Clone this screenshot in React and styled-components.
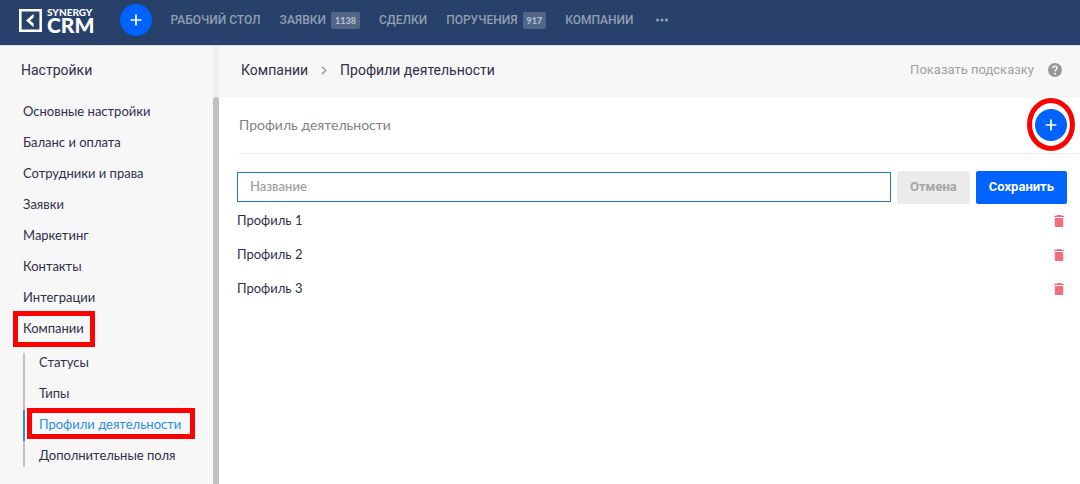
import React from 'react';
import styled, { createGlobalStyle, css } from 'styled-components';

const GlobalStyle = createGlobalStyle`
  *, *::before, *::after { box-sizing: border-box; }
  body {
    margin: 0;
    background: #fff;
    color: #2f3048;
    font: 13px/16px Lato, "Liberation Sans", sans-serif;
  }
  ul { list-style: none; margin: 0; padding: 0; }
  a { color: inherit; text-decoration: none; }
  button, input { font: inherit; }
  button { border: 0; padding: 0; cursor: pointer; }
`;

const Page = styled.div`
  display: flex;
  flex-direction: column;
  min-height: 100vh;
`;

const TopBar = styled.header`
  display: flex;
  align-items: center;
  height: 46px;
  padding: 0 19px 5px;
  background: #27416b;
  border-bottom: 1px solid #d9dee6;
`;

const Logo = styled.a`
  display: flex;
  align-items: center;
  gap: 5px;
  color: #fff;
  margin-right: 26px;
`;

const LogoText = styled.span`
  display: flex;
  flex-direction: column;
  font-weight: 900;
`;

const LogoTop = styled.span`
  font-size: 10px;
  line-height: 8px;
`;

const LogoBottom = styled.span`
  font-size: 21px;
  line-height: 17px;
`;

const RoundButton = styled.button`
  display: flex;
  align-items: center;
  justify-content: center;
  width: 32px;
  height: 32px;
  border-radius: 50%;
  background: #0062ff;
  color: #fff;
`;

const Nav = styled.nav`
  display: flex;
  align-items: center;
  gap: 19px;
  margin-left: 18px;
`;

const NavLink = styled.a`
  display: flex;
  align-items: center;
  gap: 5px;
  color: #929eb1;
  font-family: Roboto, sans-serif;
  font-size: 12px;
  font-weight: 500;
  text-transform: uppercase;
  white-space: nowrap;
`;

const Badge = styled.span`
  padding: 0 4px;
  border-radius: 2px;
  background: #526788;
  color: #b3bdcb;
  font-family: Lato, sans-serif;
  font-size: 9px;
  font-weight: 900;
  line-height: 17px;
`;

const MoreButton = styled.button`
  display: flex;
  background: none;
  color: #929eb1;
`;

const Body = styled.div`
  display: flex;
  flex: 1;
`;

const Sidebar = styled.aside`
  flex: 0 0 213px;
  padding: 16px 0 12px 23px;
  background: #f7f7f7;
`;

const SidebarTitle = styled.h2`
  margin: 0 0 17px -2px;
  font-family: Roboto, sans-serif;
  font-size: 14px;
  font-weight: 400;
  line-height: 17px;
`;

const MenuLink = styled.a`
  position: relative;
  display: inline-flex;
  align-items: center;
  height: 31px;
  padding-bottom: 2px;
  vertical-align: top;
  white-space: nowrap;
  ${p => p.$active && css`color: #2a8fe5;`}
`;

const MenuItem = styled.li`
  height: 31px;
`;

const SubMenu = styled.ul`
  position: relative;
  margin-top: 4px;
  &::before {
    content: "";
    position: absolute;
    inset: 5px auto 5px 0;
    width: 2px;
    background: #c4c4c4;
  }
`;

const SubItem = styled.li`
  position: relative;
  height: 31px;
  padding-left: 14px;
  border-left: 2px solid ${p => (p.$active ? '#2a8fe5' : 'transparent')};
  ${MenuLink} { padding-bottom: 4px; }
`;

const Mark = styled.span`
  position: absolute;
  inset: ${p => p.$inset};
  border: 5px solid #f00;
  border-radius: ${p => (p.$round ? '50%' : '0')};
  pointer-events: none;
`;

const ScrollTrack = styled.div`
  flex: 0 0 6px;
  display: flex;
  padding-top: 51px;
  background: #f0f0f0;
`;

const ScrollThumb = styled.div`
  flex: 1;
  border-radius: 3px 3px 0 0;
  background: #c1c1c1;
`;

const Main = styled.main`
  flex: 1;
  min-width: 0;
`;

const Crumbs = styled.div`
  display: flex;
  align-items: center;
  height: 51px;
  padding: 0 18px 3px 22px;
  background: #f7f7f7;
  font-family: Roboto, sans-serif;
  font-size: 14px;
`;

const CrumbArrow = styled.svg`
  margin: 0 13px;
`;

const HintButton = styled.button`
  display: flex;
  align-items: center;
  gap: 14px;
  margin-left: auto;
  background: none;
  color: #a0a0a3;
  font-size: 13px;
`;

const SectionHead = styled.div`
  display: flex;
  align-items: center;
  justify-content: space-between;
  height: 57px;
  margin-left: 20px;
  padding-right: 13px;
  border-bottom: 1px solid #ececec;
  color: #828282;
`;

const SectionTitle = styled.h1`
  margin: 0;
  font-size: 14px;
  font-weight: 400;
`;

const AddWrap = styled.div`
  position: relative;
`;

const Form = styled.form`
  display: flex;
  align-items: flex-start;
  gap: 6px;
  padding: 17px 13px 0 18px;
`;

const NameInput = styled.input`
  flex: 1;
  min-width: 0;
  height: 30px;
  margin-top: 1px;
  padding: 0 12px 2px;
  border: 1px solid #2478b8;
  border-radius: 0;
  outline: 0;
  background: #fff;
  color: #2f3048;
  font-weight: 500;
  &::placeholder { color: #9b9b9b; opacity: 1; }
`;

const FormButton = styled.button`
  height: 33px;
  padding: 0 13px 2px;
  border-radius: 2px;
  background: ${p => (p.$primary ? '#0062ff' : '#ebebeb')};
  color: ${p => (p.$primary ? '#fff' : '#a5a5a5')};
  font-family: Roboto, sans-serif;
  font-size: 13px;
  font-weight: 700;
`;

const Row = styled.li`
  display: flex;
  align-items: center;
  justify-content: space-between;
  height: 34px;
  padding: 0 16px 0 18px;
`;

const RowName = styled.span`
  padding-bottom: 2px;
`;

const DeleteButton = styled.button`
  display: flex;
  background: none;
  color: #f36d7f;
`;

const Plus = () => (
  <svg width="12" height="12" viewBox="0 0 12 12" aria-hidden="true">
    <path d="M6 .6v10.8M.6 6h10.8" stroke="currentColor" strokeWidth="1.7" />
  </svg>
);

const Trash = () => (
  <svg width="10" height="12" viewBox="0 0 10 12" aria-hidden="true">
    <path d="M3 0h4l.6.7H10V2H0V.7h2.4zM.8 3h8.4v7.7c0 .7-.6 1.3-1.3 1.3H2.1C1.4 12 .8 11.4.8 10.7z" fill="currentColor" />
  </svg>
);

const nav = [
  ['Рабочий стол'],
  ['Заявки', '1138'],
  ['Сделки'],
  ['Поручения', '917'],
  ['Компании'],
];
const menu = ['Основные настройки', 'Баланс и оплата', 'Сотрудники и права', 'Заявки', 'Маркетинг', 'Контакты', 'Интеграции', 'Компании'];
const subMenu = ['Статусы', 'Типы', 'Профили деятельности', 'Дополнительные поля'];
const profiles = ['Профиль 1', 'Профиль 2', 'Профиль 3'];

export default function App() {
  return (
    <Page>
      <GlobalStyle />
      <TopBar>
        <Logo href="#">
          <svg width="23" height="23" viewBox="0 0 23 23" aria-hidden="true">
            <path d="M1.3 1.3h20.4v20.4H1.3z" fill="none" stroke="#fff" strokeWidth="2.6" />
            <path d="M14.6 4.8v3.7l-3.5 3 3.5 3v3.7L7 11.5z" fill="#fff" />
          </svg>
          <LogoText>
            <LogoTop>SYNERGY</LogoTop>
            <LogoBottom>CRM</LogoBottom>
          </LogoText>
        </Logo>
        <RoundButton aria-label="Создать"><Plus /></RoundButton>
        <Nav>
          {nav.map(([label, count]) => (
            <NavLink href="#" key={label}>
              {label}
              {count && <Badge>{count}</Badge>}
            </NavLink>
          ))}
          <MoreButton aria-label="Ещё">
            <svg width="17" height="4" viewBox="0 0 17 4" fill="currentColor" aria-hidden="true">
              <circle cx="4.5" cy="2" r="1.6" />
              <circle cx="9" cy="2" r="1.6" />
              <circle cx="13.5" cy="2" r="1.6" />
            </svg>
          </MoreButton>
        </Nav>
      </TopBar>
      <Body>
        <Sidebar>
          <SidebarTitle>Настройки</SidebarTitle>
          <ul>
            {menu.map(label => (
              <MenuItem key={label}>
                <MenuLink href="#">
                  {label}
                  {label === 'Компании' && <Mark $inset="-2px -11px -3px -10px" />}
                </MenuLink>
              </MenuItem>
            ))}
          </ul>
          <SubMenu>
            {subMenu.map(label => {
              const active = label === 'Профили деятельности';
              return (
                <SubItem key={label} $active={active}>
                  <MenuLink href="#" $active={active}>
                    {label}
                    {active && <Mark $inset="-2px -14px 2px -12px" />}
                  </MenuLink>
                </SubItem>
              );
            })}
          </SubMenu>
        </Sidebar>
        <ScrollTrack><ScrollThumb /></ScrollTrack>
        <Main>
          <Crumbs>
            <a href="#">Компании</a>
            <CrumbArrow width="6" height="9" viewBox="0 0 6 9" aria-hidden="true">
              <path d="M1 .8l3.7 3.7L1 8.2" fill="none" stroke="#999" strokeWidth="1.4" />
            </CrumbArrow>
            <span>Профили деятельности</span>
            <HintButton>
              Показать подсказку
              <svg width="14" height="14" viewBox="0 0 14 14" aria-hidden="true">
                <circle cx="7" cy="7" r="7" fill="#97979b" />
                <path d="M4.9 5.3C4.9 4 5.8 3.2 7 3.2s2.1.8 2.1 1.9C9.1 6.5 7 6.7 7 8.5" fill="none" stroke="#f7f7f7" strokeWidth="1.5" />
                <circle cx="7" cy="10.7" r=".95" fill="#f7f7f7" />
              </svg>
            </HintButton>
          </Crumbs>
          <SectionHead>
            <SectionTitle>Профиль деятельности</SectionTitle>
            <AddWrap>
              <RoundButton aria-label="Добавить"><Plus /></RoundButton>
              <Mark $round $inset="-11px -8px -10px" />
            </AddWrap>
          </SectionHead>
          <Form onSubmit={e => e.preventDefault()}>
            <NameInput aria-label="Название" placeholder="Название" />
            <FormButton type="button">Отмена</FormButton>
            <FormButton type="submit" $primary>Сохранить</FormButton>
          </Form>
          <ul>
            {profiles.map(name => (
              <Row key={name}>
                <RowName>{name}</RowName>
                <DeleteButton aria-label={`Удалить ${name}`}><Trash /></DeleteButton>
              </Row>
            ))}
          </ul>
        </Main>
      </Body>
    </Page>
  );
}
